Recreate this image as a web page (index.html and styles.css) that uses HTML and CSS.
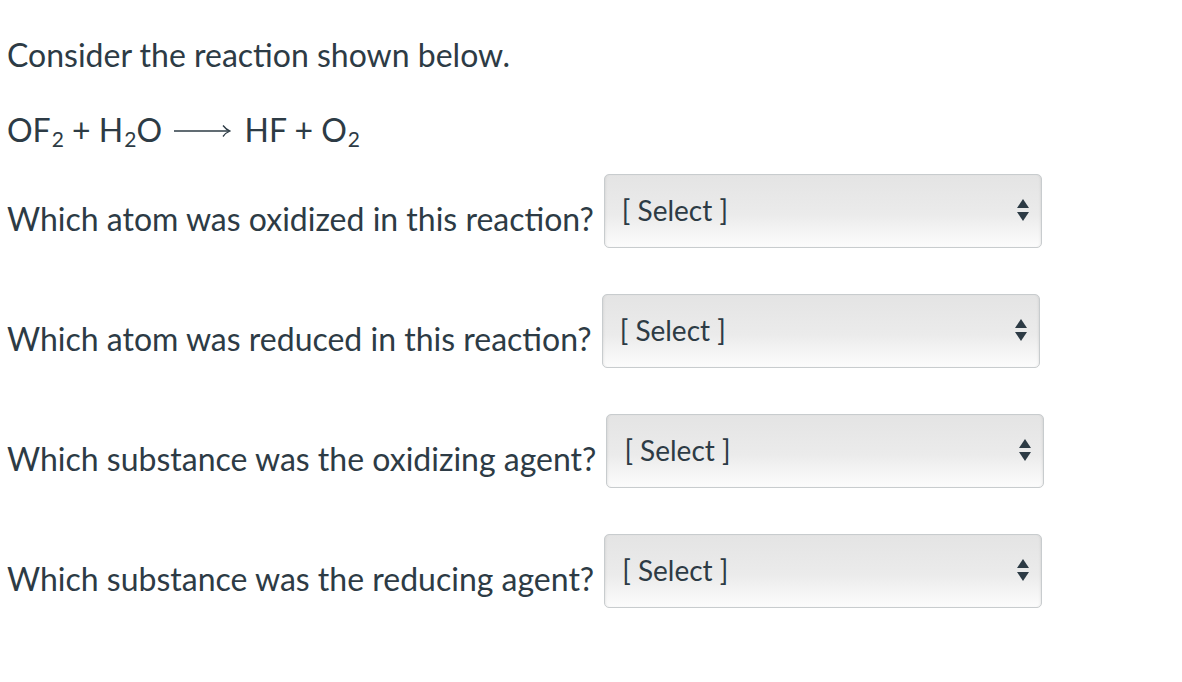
FILE: index.html
```html
<!DOCTYPE html>
<html>
<head>
<meta charset="utf-8">
<link rel="stylesheet" href="styles.css">
</head>
<body>
<div class="page">
  <p class="intro">Consider the reaction shown below.</p>
  <p class="equation">OF<sub>2</sub> + H<sub>2</sub>O <span class="arrow"><svg width="58" height="14" viewBox="0 0 58 14"><line x1="1" y1="7" x2="56" y2="7" stroke="#2d3b45" stroke-width="1.3"/><path d="M50 1.5 Q53 5.5 57 7 Q53 8.5 50 12.5" fill="none" stroke="#2d3b45" stroke-width="1.3"/></svg></span> HF + O<sub>2</sub></p>

  <div class="question">
    <span class="label">Which atom was oxidized in this reaction?</span>
    <div class="select"><span class="select-text">[ Select ]</span><span class="updown"></span></div>
  </div>
  <div class="question">
    <span class="label">Which atom was reduced in this reaction?</span>
    <div class="select"><span class="select-text">[ Select ]</span><span class="updown"></span></div>
  </div>
  <div class="question">
    <span class="label">Which substance was the oxidizing agent?</span>
    <div class="select"><span class="select-text">[ Select ]</span><span class="updown"></span></div>
  </div>
  <div class="question">
    <span class="label">Which substance was the reducing agent?</span>
    <div class="select"><span class="select-text">[ Select ]</span><span class="updown"></span></div>
  </div>
</div>
</body>
</html>
```

FILE: styles.css
```css
html, body {
  margin: 0;
  padding: 0;
  background: #ffffff;
}
.page {
  padding: 31px 0 0 7px;
  font-family: Lato, "Noto Sans", sans-serif;
  font-size: 32px;
  line-height: 48px;
  color: #2d3b45;
}
p {
  margin: 0;
}
.equation {
  margin-top: 23px;
}
.equation sub {
  font-size: 21px;
  vertical-align: -5px;
  line-height: 0;
  margin-left: 1px;
}
.arrow {
  display: inline-block;
  vertical-align: 4px;
  margin: 0 5px 0 3px;
}
.question {
  display: flex;
  align-items: flex-start;
  gap: 10px;
  height: 74px;
  margin-bottom: 46px;
}
.equation + .question {
  margin-top: 20px;
}
.label {
  margin-top: 21px;
}
.select {
  width: 438px;
  height: 74px;
  box-sizing: border-box;
  border: 1px solid #c8ccce;
  border-radius: 5px;
  background: linear-gradient(#e4e4e4, #ebebeb 55%, #fcfcfc);
  box-shadow: inset 2px 0 3px -2px rgba(0,0,0,0.12), inset -2px 0 3px -2px rgba(0,0,0,0.12);
  display: flex;
  align-items: center;
  justify-content: space-between;
  padding: 0 11px 0 17px;
}
.select-text {
  font-size: 28px;
  line-height: 34px;
  margin-top: -3px;
}
.updown {
  position: relative;
  width: 13px;
  height: 22px;
  margin-top: -2px;
}
.updown::before,
.updown::after {
  content: "";
  position: absolute;
  left: 0;
  border-left: 6.5px solid transparent;
  border-right: 6.5px solid transparent;
}
.updown::before {
  top: 0;
  border-bottom: 9px solid #2d3b45;
}
.updown::after {
  bottom: 0;
  border-top: 9px solid #2d3b45;
}
```
